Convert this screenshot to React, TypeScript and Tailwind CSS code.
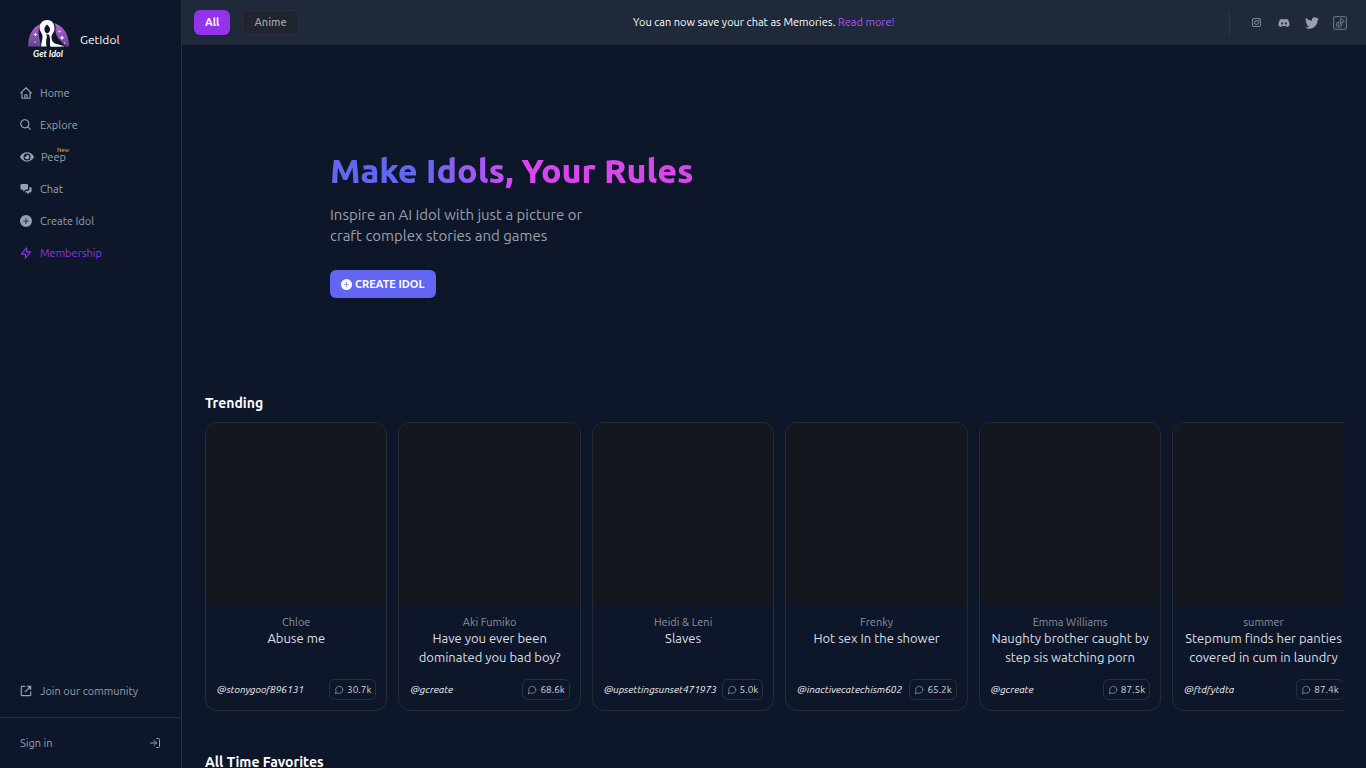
import type { ReactNode } from "react";
import { BiLinkExternal, BiSearch } from "react-icons/bi";
import { BsInstagram, BsPlusCircleFill } from "react-icons/bs";
import { FaDiscord, FaEye, FaTwitter } from "react-icons/fa";
import { FiLogIn, FiMessageCircle } from "react-icons/fi";
import { HiChatAlt2, HiOutlineHome, HiOutlineLightningBolt } from "react-icons/hi";

type Idol = {
  name: string;
  title: string;
  author: string;
  chats: string;
};

const trending: Idol[] = [
  { name: "Chloe", title: "Abuse me", author: "@stonygoof896131", chats: "30.7k" },
  { name: "Aki Fumiko", title: "Have you ever been dominated you bad boy?", author: "@gcreate", chats: "68.6k" },
  { name: "Heidi & Leni", title: "Slaves", author: "@upsettingsunset471973", chats: "5.0k" },
  { name: "Frenky", title: "Hot sex In the shower", author: "@inactivecatechism602", chats: "65.2k" },
  { name: "Emma Williams", title: "Naughty brother caught by step sis watching porn", author: "@gcreate", chats: "87.5k" },
  { name: "summer", title: "Stepmum finds her panties covered in cum in laundry", author: "@ftdfytdta", chats: "87.4k" },
];

function Logo() {
  return (
    <svg viewBox="0 0 41 40" className="h-10 w-[41px] shrink-0" aria-hidden="true">
      <defs>
        <linearGradient id="dome" x1="0" y1="0" x2="0" y2="1">
          <stop offset="0" stopColor="#bb68d8" />
          <stop offset="1" stopColor="#60448f" />
        </linearGradient>
      </defs>
      <path d="M0 26.500C0 12 8 2.500 20.500 2.500S41 12 41 26.500Z" fill="url(#dome)" />
      <path d="M12.500 27c.5-5-2-10-2-16C10.500 4 14 0 20 0c6 0 8.500 5 7.500 10-.6 4 2.500 9 10.500 16.500V27Z" fill="#0e1729" />
      <path
        d="M19.500 0C14.500 0 11.500 3.500 11.500 8c0 3.500 3 5 3 8.500 0 4-1.500 6-1.300 10h5.300c-.6-4-.5-7 .5-10l-1-2h3l1 4v8H33c-.5-1.200-3-2-5-2.500-3-.8-4.500-3.500-4.500-7 0-3 3-4.500 3-8.500 0-5-2.500-8.500-7-8.500Z"
        fill="#fff"
      />
      <path d="M19 4.500c-2 1.500-3 3.500-2.500 6 .3 1.300 1.200 2.500 2.500 3 1.800-.5 3-2 3-4 0-2-1.200-3.500-3-5Z" fill="#0e1729" />
      <path d="M24.500 23c3 1.500 7 1.200 12.500 3.500H23Z" fill="#fff" />
      <path d="m7.500 12.500.6 1.400 1.400.6-1.400.6-.6 1.400-.6-1.400-1.400-.6 1.400-.6zM34 15l.7 2 2 .7-2 .7-.7 2-.7-2-2-.7 2-.7zM31.500 10l.4 1.100 1.100.4-1.100.4-.4 1.100-.4-1.100-1.100-.4 1.100-.4z" fill="#fff" />
      <circle cx="7" cy="22" r=".8" fill="#e4c8f2" />
      <circle cx="36.500" cy="23" r=".8" fill="#e4c8f2" />
      <text x="20" y="37" textAnchor="middle" fill="#fff" fontSize="9" fontStyle="italic" fontWeight="700" fontFamily="Lato, sans-serif">
        Get Idol
      </text>
    </svg>
  );
}

function TiktokSquare() {
  return (
    <svg viewBox="0 0 24 24" className="size-4" fill="none" stroke="currentColor" strokeWidth="1.500" aria-hidden="true">
      <rect x="2.500" y="2.500" width="19" height="19" rx="1.500" />
      <path d="M12.500 5.500h2.300c.2 1.700 1.300 2.800 3 3v2.400c-1.100 0-2.100-.3-3-.9v4.400a4.100 4.100 0 1 1-4.700-4v2.500a1.700 1.700 0 1 0 2.400 1.500z" />
    </svg>
  );
}

function NavItem({ icon, children, accent }: { icon: ReactNode; children: ReactNode; accent?: boolean }) {
  return (
    <a href="#" className={`flex h-8 items-center gap-[7px] text-[11px] ${accent ? "text-[#8a35e0]" : "text-[#94a0b3]"}`}>
      {icon}
      <span>{children}</span>
    </a>
  );
}

function Sidebar() {
  return (
    <aside className="flex w-[182px] shrink-0 flex-col border-r border-[#253043]">
      <a href="#" className="flex items-center gap-[11px] pt-5 pl-7 text-xs text-white">
        <Logo />
        GetIdol
      </a>
      <nav className="mt-[17px] flex flex-col px-[19px]">
        <NavItem icon={<HiOutlineHome className="size-[14px]" />}>Home</NavItem>
        <NavItem icon={<BiSearch className="size-[14px]" />}>Explore</NavItem>
        <NavItem icon={<FaEye className="ml-px size-[14px]" />}>
          <span className="relative">
            Peep
            <span className="absolute -top-1 left-4 text-[6px] leading-none text-[#eabf20]">New</span>
          </span>
        </NavItem>
        <NavItem icon={<HiChatAlt2 className="size-[14px]" />}>Chat</NavItem>
        <NavItem icon={<BsPlusCircleFill className="size-[14px] p-px" />}>Create Idol</NavItem>
        <NavItem icon={<HiOutlineLightningBolt className="size-[14px]" />} accent>
          Membership
        </NavItem>
      </nav>
      <div className="mt-auto px-[19px] pb-[10px]">
        <NavItem icon={<BiLinkExternal className="size-[14px]" />}>Join our community</NavItem>
      </div>
      <a href="#" className="flex h-[51px] items-center justify-between border-t border-[#253043] px-5 text-[11px] text-[#94a0b3]">
        Sign in
        <FiLogIn className="size-3" />
      </a>
    </aside>
  );
}

function Header() {
  return (
    <header className="flex h-[45px] shrink-0 items-center bg-[#1f293a] px-3">
      <div className="flex gap-3">
        <button className="h-[25px] rounded-md bg-[#9333ea] px-[11px] text-[11px] font-semibold text-white">All</button>
        <button className="h-[25px] rounded-md border border-[#2b2e38] bg-[#20242f] px-[11px] text-[11px] font-medium text-[#9ca0a8]">
          Anime
        </button>
      </div>
      <p className="flex-1 text-center text-[11px] text-white">
        You can now save your chat as Memories.{" "}
        <a href="#" className="text-[#a855f7]">
          Read more!
        </a>
      </p>
      <div className="flex items-center gap-3 border-l border-[#303847] py-1 pr-[6px] pl-[18px] text-[#9a9ea7]">
        <a href="#" aria-label="Instagram" className="flex w-4 justify-center">
          <BsInstagram className="size-[9px]" />
        </a>
        <a href="#" aria-label="Discord" className="flex w-4 justify-center">
          <FaDiscord className="size-3" />
        </a>
        <a href="#" aria-label="Twitter" className="flex w-4 justify-center">
          <FaTwitter className="size-[14px]" />
        </a>
        <a href="#" aria-label="TikTok" className="flex w-4 justify-center text-[#757c88]">
          <TiktokSquare />
        </a>
      </div>
    </header>
  );
}

function IdolCard({ name, title, author, chats }: Idol) {
  return (
    <article className="w-[17%] shrink-0 pr-[11px]">
      <div className="overflow-hidden rounded-xl border border-[#262b36]">
        <div className="aspect-square bg-[#15171f]" />
        <div className="px-[11px] pt-[13px] pb-[10px] text-center">
          <p className="text-[11px] leading-3 text-[#8b919d]">{name}</p>
          <h3 className="-mx-1 mt-px h-[38px] text-[13px] leading-[19px] text-[#dcdfe4]">{title}</h3>
          <div className="mt-3 -mr-px flex items-center justify-between">
            <a href="#" className="pb-px text-[10px] text-[#f3f4f6] italic">
              {author}
            </a>
            <span className="flex h-[21px] items-center gap-[3px] rounded-md border border-[#273040] px-1 text-[10px] text-[#d1d5db]">
              <FiMessageCircle className="size-[10px] text-[#8b919c]" />
              {chats}
            </span>
          </div>
        </div>
      </div>
    </article>
  );
}

export default function App() {
  return (
    <div className="flex h-screen overflow-hidden bg-[#0e1729] font-['Ubuntu','Noto_Sans',sans-serif]">
      <Sidebar />
      <div className="flex min-w-0 flex-1 flex-col">
        <Header />
        <main className="min-h-0 flex-1 overflow-hidden px-[23px]">
          <section className="pt-[104px] pl-[125px]">
            <h1 className="w-fit bg-linear-to-r from-[#6366f1] from-25% via-[#a855f7] via-42% to-[#d946ef] to-52% bg-clip-text text-[34px] leading-[42px] font-extrabold text-transparent">
              Make Idols, Your Rules
            </h1>
            <p className="mt-[13px] text-[15px] leading-[21px] text-[#9ca0a9]">
              Inspire an AI Idol with just a picture or
              <br />
              craft complex stories and games
            </p>
            <button className="mt-6 flex h-7 items-center gap-[3px] rounded-md bg-[#6366f1] px-[11px] text-[11px] font-semibold text-white">
              <BsPlusCircleFill className="size-[11px]" />
              CREATE IDOL
            </button>
          </section>
          <section className="mt-24">
            <h2 className="text-[14px] leading-[18px] font-bold text-white">Trending</h2>
            <div className="mt-[10px] flex overflow-hidden">
              {trending.map((idol) => (
                <IdolCard key={idol.title} {...idol} />
              ))}
            </div>
          </section>
          <section className="mt-[42px]">
            <h2 className="text-[14px] leading-[18px] font-bold text-white">All Time Favorites</h2>
          </section>
        </main>
      </div>
    </div>
  );
}
